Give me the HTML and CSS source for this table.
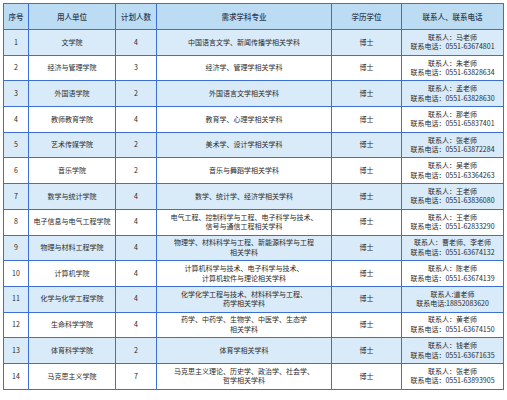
FILE: index.html
```html
<!DOCTYPE html>
<html lang="zh">
<head>
<meta charset="utf-8">
<link rel="stylesheet" href="styles.css">
</head>
<body>
<table class="plan">
  <colgroup>
    <col class="c-no"><col class="c-unit"><col class="c-num"><col class="c-major"><col class="c-deg"><col class="c-contact">
  </colgroup>
  <thead>
    <tr><th>序号</th><th>用人单位</th><th>计划人数</th><th>需求学科专业</th><th>学历学位</th><th>联系人、联系电话</th></tr>
  </thead>
  <tbody>
    <tr><td>1</td><td>文学院</td><td>4</td><td>中国语言文学、新闻传播学相关学科</td><td>博士</td><td>联系人：马老师<br>联系电话：0551-63674801</td></tr>
    <tr><td>2</td><td>经济与管理学院</td><td>3</td><td>经济学、管理学相关学科</td><td>博士</td><td>联系人：朱老师<br>联系电话：0551-63828634</td></tr>
    <tr><td>3</td><td>外国语学院</td><td>2</td><td>外国语言文学相关学科</td><td>博士</td><td>联系人：孟老师<br>联系电话：0551-63828630</td></tr>
    <tr><td>4</td><td>教师教育学院</td><td>4</td><td>教育学、心理学相关学科</td><td>博士</td><td>联系人：那老师<br>联系电话：0551-65837401</td></tr>
    <tr><td>5</td><td>艺术传媒学院</td><td>2</td><td>美术学、设计学相关学科</td><td>博士</td><td>联系人：张老师<br>联系电话：0551-63872284</td></tr>
    <tr><td>6</td><td>音乐学院</td><td>2</td><td>音乐与舞蹈学相关学科</td><td>博士</td><td>联系人：吴老师<br>联系电话：0551-63364263</td></tr>
    <tr><td>7</td><td>数学与统计学院</td><td>4</td><td>数学、统计学、经济学相关学科</td><td>博士</td><td>联系人：王老师<br>联系电话：0551-63836080</td></tr>
    <tr><td>8</td><td>电子信息与电气工程学院</td><td>4</td><td>电气工程、控制科学与工程、电子科学与技术、<br>信号与通信工程相关学科</td><td>博士</td><td>联系人：王老师<br>联系电话：0551-62833290</td></tr>
    <tr><td>9</td><td>物理与材料工程学院</td><td>4</td><td>物理学、材料科学与工程、新能源科学与工程<br>相关学科</td><td>博士</td><td>联系人：曹老师、李老师<br>联系电话：0551-63674132</td></tr>
    <tr><td>10</td><td>计算机学院</td><td>4</td><td>计算机科学与技术、电子科学与技术、<br>计算机软件与理论相关学科</td><td>博士</td><td>联系人：陈老师<br>联系电话：0551-63674139</td></tr>
    <tr><td>11</td><td>化学与化学工程学院</td><td>4</td><td>化学化学工程与技术、材料科学与工程、<br>药学相关学科</td><td>博士</td><td>联系人:道老师<br>联系电话:18852083620</td></tr>
    <tr><td>12</td><td>生命科学学院</td><td>4</td><td>药学、中药学、生物学、中医学、生态学<br>相关学科</td><td>博士</td><td>联系人：黄老师<br>联系电话：0551-63674150</td></tr>
    <tr><td>13</td><td>体育科学学院</td><td>2</td><td>体育学相关学科</td><td>博士</td><td>联系人：钱老师<br>联系电话：0551-63671635</td></tr>
    <tr><td>14</td><td>马克思主义学院</td><td>7</td><td>马克思主义理论、历史学、政治学、社会学、<br>哲学相关学科</td><td>博士</td><td>联系人：张老师<br>联系电话：0551-63893905</td></tr>
  </tbody>
</table>
</body>
</html>
```
FILE: styles.css
```css
html, body {
  margin: 0;
  padding: 0;
  background: #ffffff;
}
body {
  padding: 3px 0 0 3px;
  font-family: "Noto Sans CJK SC", "Noto Sans", sans-serif;
  color: #2a2a2a;
}
.plan {
  width: 500px;
  table-layout: fixed;
  border-collapse: collapse;
  border: 1.5px solid #6f9ee0;
  font-size: 7px;
  line-height: 9.5px;
}
.c-no { width: 25px; }
.c-unit { width: 87px; }
.c-num { width: 41px; }
.c-major { width: 175px; }
.c-deg { width: 70px; }
.c-contact { width: 102px; }
.plan th, .plan td {
  border: 1px solid #3d6fd6;
  text-align: center;
  vertical-align: middle;
  padding: 0;
  white-space: nowrap;
  overflow: hidden;
}
.plan th {
  height: 25px;
  background: #bcdcf4;
  font-weight: 500;
  font-size: 7.5px;
  color: #2b3a4f;
}
.plan td {
  height: 24.7px;
}
.plan tbody tr:nth-child(odd) td {
  background: #d9ebf8;
}
.plan tbody tr:nth-child(even) td {
  background: #ffffff;
}
```
